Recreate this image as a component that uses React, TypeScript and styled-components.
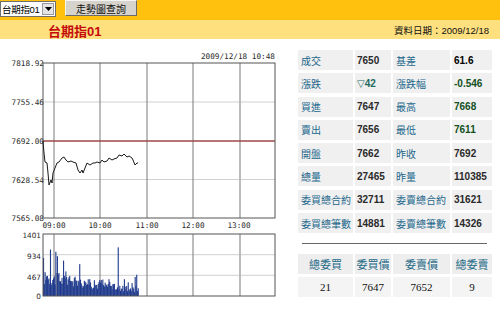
import React from "react";
import styled, { createGlobalStyle } from "styled-components";

const GlobalStyle = createGlobalStyle`
  html, body { margin: 0; padding: 0; background: #ffffff; }
  body { font-family: "Liberation Sans", "Noto Sans CJK TC", sans-serif; }
`;

const CJK = `"Liberation Sans", "Noto Sans CJK TC", sans-serif`;

const Page = styled.div`
  width: 500px;
  height: 322px;
  overflow: hidden;
  background: #ffffff;
`;

const TopBar = styled.div`
  height: 20px;
  background: #ffc10d;
  display: flex;
  align-items: flex-start;
  gap: 9px;
`;

const FakeSelect = styled.div`
  margin-top: 1px;
  width: 56px;
  height: 16px;
  box-sizing: border-box;
  border: 1px solid #6f6f6f;
  background: #ffffff;
  display: flex;
  align-items: center;
  justify-content: space-between;
  padding-left: 1px;
`;

const SelectText = styled.span`
  font-family: ${CJK};
  font-size: 9.5px;
  letter-spacing: -0.3px;
  color: #000;
  white-space: nowrap;
  overflow: hidden;
`;

const SelectArrow = styled.span`
  flex: none;
  width: 12px;
  height: 12px;
  margin-right: 1px;
  background: #e4e4e4;
  border: 1px solid #9a9a9a;
  box-sizing: border-box;
  display: flex;
  align-items: center;
  justify-content: center;
`;

const QueryButton = styled.div`
  width: 72px;
  height: 16px;
  box-sizing: border-box;
  background: #d6d3cc;
  border-top: 1px solid #f4f4f4;
  border-left: 1px solid #f4f4f4;
  border-right: 1px solid #6a6a6a;
  border-bottom: 1px solid #6a6a6a;
  display: flex;
  align-items: center;
  justify-content: center;
  font-family: ${CJK};
  font-size: 10px;
  color: #111;
`;

const SubBar = styled.div`
  height: 19px;
  background: #ffe07f;
  display: flex;
  align-items: center;
  justify-content: space-between;
  padding: 0 11px 0 48px;
`;

const Title = styled.span`
  font-family: ${CJK};
  font-size: 13px;
  font-weight: bold;
  color: #c40c0c;
  margin-top: 2px;
`;

const DateText = styled.span`
  font-family: ${CJK};
  font-size: 9.5px;
  color: #111;
`;

const Main = styled.div`
  display: flex;
  align-items: flex-start;
`;

const ChartArea = styled.div`
  width: 298px;
  flex: none;
`;

const Panel = styled.div`
  width: 194px;
  margin-top: 11px;
  display: flex;
  flex-direction: column;
`;

const QuoteGrid = styled.div`
  display: grid;
  grid-template-columns: 55px 36px 57px 40px;
  column-gap: 2px;
  grid-auto-rows: 20px;
  row-gap: 3.3px;
`;

const LabelCell = styled.div`
  background: #f0f0f0;
  display: flex;
  align-items: center;
  padding-left: 3px;
  font-family: ${CJK};
  font-size: 10px;
  color: #23678b;
  white-space: nowrap;
  overflow: hidden;
`;

const toneColor: Record<string, string> = {
  dark: "#2a2a2a",
  black: "#000000",
  green: "#14501e",
  teal: "#1f6a60",
};

const ValueCell = styled.div<{ $tone: string }>`
  background: #f0f0f0;
  display: flex;
  align-items: center;
  padding-left: 2px;
  font-family: "Liberation Sans", "DejaVu Sans", sans-serif;
  font-size: 10px;
  font-weight: bold;
  color: ${(p) => toneColor[p.$tone]};
  white-space: nowrap;
`;

const Divider = styled.div`
  margin: 10px 5px 0 4px;
  height: 1px;
  background: #666666;
`;

const OrderGrid = styled.div`
  margin-top: 10px;
  display: grid;
  grid-template-columns: 55px 36px 57px 40px;
  column-gap: 2px;
  grid-template-rows: 20px 20px;
  row-gap: 3px;
`;

const OrderHead = styled.div`
  background: #eeeeee;
  display: flex;
  align-items: center;
  justify-content: center;
  font-family: ${CJK};
  font-size: 11px;
  color: #1f6a86;
  white-space: nowrap;
`;

const OrderValue = styled.div`
  background: #f4f4f4;
  display: flex;
  align-items: center;
  justify-content: center;
  font-family: "Liberation Serif", serif;
  font-size: 11px;
  color: #111;
`;

const quotes: [string, string, string, string, string, string][] = [
  ["成交", "7650", "dark", "基差", "61.6", "black"],
  ["漲跌", "▽42", "teal", "漲跌幅", "-0.546", "green"],
  ["買進", "7647", "dark", "最高", "7668", "green"],
  ["賣出", "7656", "dark", "最低", "7611", "green"],
  ["開盤", "7662", "dark", "昨收", "7692", "dark"],
  ["總量", "27465", "dark", "昨量", "110385", "dark"],
  ["委買總合約", "32711", "dark", "委賣總合約", "31621", "dark"],
  ["委買總筆數", "14881", "dark", "委賣總筆數", "14326", "dark"],
];

const orderHeads = ["總委買", "委買價", "委賣價", "總委賣"];
const orderValues = ["21", "7647", "7652", "9"];

const pricePts: [number, number][] = [
  [43, 141], [44, 153], [45, 162], [47, 163], [48, 173], [49, 185], [51, 180],
  [52, 183], [53, 173], [55, 168], [57, 163], [59, 162], [62, 158], [64, 157],
  [66, 160], [68, 162], [71, 161], [73, 162], [76, 163], [78, 170], [80, 173],
  [82, 170], [83, 173], [85, 168], [87, 163], [90, 165], [93, 163], [95, 163],
  [97, 162], [100, 163], [102, 160], [104, 162], [107, 161], [109, 158],
  [112, 160], [114, 159], [117, 158], [119, 155], [122, 156], [124, 154],
  [127, 157], [129, 156], [132, 158], [133, 160], [135, 165], [137, 163],
  [138, 163],
];

function buildVolumes(): number[] {
  let s = 17;
  const rand = () => {
    s = (s * 9301 + 49297) % 233280;
    return s / 233280;
  };
  const out: number[] = [];
  for (let i = 0; i < 124; i++) {
    const base = Math.max(150, 460 - i * 2.6);
    let v = base * (0.55 + rand() * 0.7);
    if (rand() > 0.88) v *= 1.6;
    out.push(v);
  }
  const spikes: Record<number, number> = {
    9: 1050, 16: 1000, 18: 900, 20: 520, 26: 800, 30: 430, 47: 720, 60: 380,
    75: 360, 85: 380, 97: 1100, 105: 380, 119: 430, 121: 480,
  };
  Object.keys(spikes).forEach((k) => {
    out[Number(k)] = spikes[Number(k)];
  });
  return out;
}

const volumes = buildVolumes();

const PriceChart: React.FC = () => {
  const vx = [54, 100, 147, 193];
  const priceLabels = [
    ["7818.92", 63],
    ["7755.46", 102],
    ["7692.00", 141],
    ["7628.54", 179.5],
    ["7565.08", 218],
  ] as const;
  const times = [
    ["09:00", 54],
    ["10:00", 100],
    ["11:00", 147],
    ["12:00", 193],
    ["13:00", 239],
  ] as const;
  const volLabels = [
    ["1401", 235],
    ["934", 256],
    ["467", 277],
    ["0", 296],
  ] as const;
  const vTop = 234;
  const vBot = 296;
  return (
    <svg width={298} height={283} viewBox="0 39 298 283" style={{ display: "block" }}>
      <g fontFamily="'DejaVu Sans Mono', 'Liberation Mono', monospace" fontSize={7.7} fill="#2a2a2a">
        <text x={275} y={59} textAnchor="end">2009/12/18 10:48</text>
        {priceLabels.map(([t, y]) => (
          <text key={t} x={44} y={y + 3} textAnchor="end">{t}</text>
        ))}
        {times.map(([t, x]) => (
          <text key={t} x={x} y={228} textAnchor="middle">{t}</text>
        ))}
      </g>
      <line x1={43} y1={102} x2={275} y2={102} stroke="#d0d0d0" strokeWidth={1} />
      <line x1={43} y1={179.5} x2={275} y2={179.5} stroke="#d0d0d0" strokeWidth={1} />
      {vx.map((x) => (
        <line key={x} x1={x} y1={63} x2={x} y2={218} stroke="#7a7a7a" strokeWidth={1} />
      ))}
      <line x1={240} y1={63} x2={240} y2={218} stroke="#b4b4b4" strokeWidth={1.8} />
      <line x1={43} y1={141} x2={275} y2={141} stroke="#9c4a44" strokeWidth={1.6} />
      <rect x={43} y={63} width={232} height={155} fill="none" stroke="#555" strokeWidth={1} />
      <polyline
        points={pricePts.map((p) => p.join(",")).join(" ")}
        fill="none"
        stroke="#1a1a1a"
        strokeWidth={1}
      />
      <g fontFamily="'DejaVu Sans', sans-serif" fontSize={7.3} fill="#2a2a2a">
        {volLabels.map(([t, y]) => (
          <text key={t} x={41} y={y + 2.5} textAnchor="end">{t}</text>
        ))}
      </g>
      <line x1={43} y1={254.7} x2={275} y2={254.7} stroke="#d0d0d0" strokeWidth={1} />
      <line x1={43} y1={275.3} x2={275} y2={275.3} stroke="#d0d0d0" strokeWidth={1} />
      {vx.map((x) => (
        <line key={x} x1={x} y1={vTop} x2={x} y2={vBot} stroke="#7a7a7a" strokeWidth={1} />
      ))}
      <line x1={240} y1={vTop} x2={240} y2={vBot} stroke="#b4b4b4" strokeWidth={1.8} />
      {volumes.map((v, i) => {
        const h = (v / 1401) * (vBot - vTop);
        return (
          <rect
            key={i}
            x={43 + i * 0.77}
            y={vBot - h}
            width={1.1}
            height={h}
            fill={i % 7 === 3 && v > 450 ? "#6a6f86" : "#1f3a8c"}
          />
        );
      })}
      <rect x={43} y={vTop} width={232} height={vBot - vTop} fill="none" stroke="#555" strokeWidth={1} />
    </svg>
  );
};

const App: React.FC = () => (
  <Page>
    <GlobalStyle />
    <TopBar>
      <FakeSelect>
        <SelectText>台期指01</SelectText>
        <SelectArrow>
          <svg width="7" height="4" viewBox="0 0 7 4">
            <path d="M0 0 H7 L3.5 4 Z" fill="#000" />
          </svg>
        </SelectArrow>
      </FakeSelect>
      <QueryButton>走勢圖查詢</QueryButton>
    </TopBar>
    <SubBar>
      <Title>台期指01</Title>
      <DateText>資料日期：2009/12/18</DateText>
    </SubBar>
    <Main>
      <ChartArea>
        <PriceChart />
      </ChartArea>
      <Panel>
        <QuoteGrid>
          {quotes.map(([l1, v1, t1, l2, v2, t2]) => (
            <React.Fragment key={l1}>
              <LabelCell>{l1}</LabelCell>
              <ValueCell $tone={t1}>{v1}</ValueCell>
              <LabelCell>{l2}</LabelCell>
              <ValueCell $tone={t2}>{v2}</ValueCell>
            </React.Fragment>
          ))}
        </QuoteGrid>
        <Divider />
        <OrderGrid>
          {orderHeads.map((h) => (
            <OrderHead key={h}>{h}</OrderHead>
          ))}
          {orderValues.map((v, i) => (
            <OrderValue key={i}>{v}</OrderValue>
          ))}
        </OrderGrid>
      </Panel>
    </Main>
  </Page>
);

export default App;
